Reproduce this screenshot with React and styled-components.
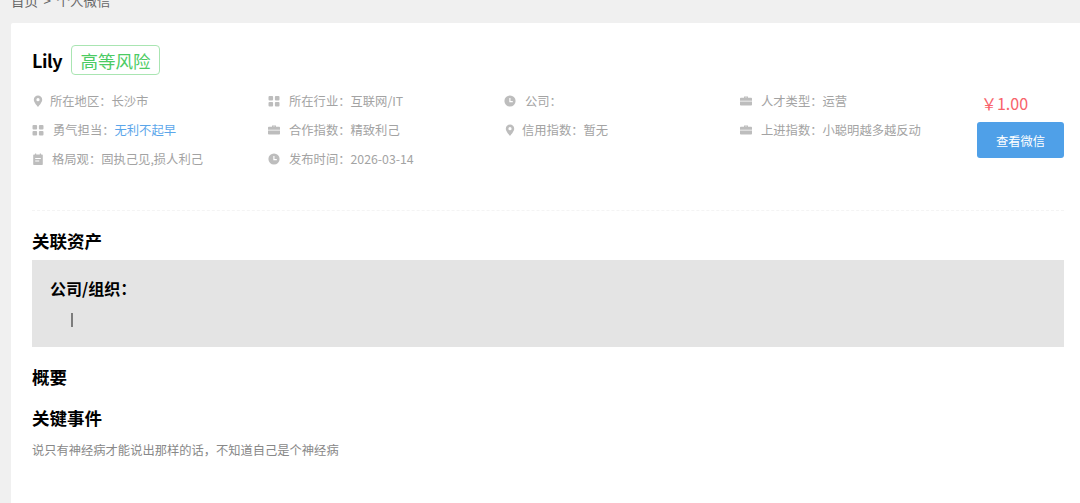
import React from "react";
import styled, { createGlobalStyle } from "styled-components";

const FONT = `"Noto Sans CJK SC", "Noto Sans", sans-serif`;

const GlobalStyle = createGlobalStyle`
  html, body {
    margin: 0;
    padding: 0;
    height: 503px;
    overflow: hidden;
    background: #f0f0f0;
    font-family: ${FONT};
  }
`;

const Page = styled.div`
  height: 503px;
  padding-left: 11px;
  overflow: hidden;
  box-sizing: border-box;
`;

const Breadcrumb = styled.div`
  height: 23px;
  margin-top: -9px;
  padding-bottom: 9px;
  font-size: 13.5px;
  word-spacing: 2.5px;
  line-height: 18px;
  color: #666;
`;

const Card = styled.div`
  background: #fff;
  border-radius: 2px 0 0 0;
  height: 480px;
  padding: 22px 16px 0 21px;
  box-sizing: border-box;
`;

const TitleRow = styled.div`
  display: flex;
  align-items: center;
  gap: 9px;
  height: 30px;
`;

const Name = styled.span`
  width: 30px;
  font-size: 18px;
  letter-spacing: -0.4px;
  font-weight: 700;
  color: #000;
`;

const RiskTag = styled.span`
  display: flex;
  align-items: center;
  justify-content: center;
  width: 89px;
  height: 30px;
  box-sizing: border-box;
  border: 1px solid #a9e5b2;
  border-radius: 4px;
  font-size: 17.5px;
  color: #4ccb63;
`;

const Summary = styled.div`
  display: flex;
  margin-top: 11px;
  height: 124px;
  border-bottom: 1px dashed #f4f4f4;
`;

const MetaGrid = styled.div`
  display: grid;
  grid-template-columns: repeat(4, 236px);
  grid-auto-rows: 29px;
`;

const MetaItem = styled.div`
  display: flex;
  align-items: center;
  font-size: 12.3px;
  color: #a3a3a3;
  white-space: nowrap;
`;

const MetaIcon = styled.svg`
  width: 12px;
  height: 12px;
  flex: none;
  margin-right: ${({ $gap }) => $gap}px;
  fill: #bdbdbd;
`;

const MetaValue = styled.span`
  color: ${({ $link }) => ($link ? "#5ba6ea" : "#a3a3a3")};
`;

const Buy = styled.div`
  width: 87px;
  margin-left: 1px;
  display: flex;
  flex-direction: column;
  align-items: center;
`;

const Price = styled.div`
  height: 29px;
  margin: 3px 32px 0 0;
  font-size: 16px;
  line-height: 29px;
  color: #f8636b;
`;

const ViewButton = styled.button`
  width: 87px;
  height: 36px;
  margin-top: 4px;
  padding: 2px 0 0;
  border: 0;
  border-radius: 3px;
  background: #4fa0e8;
  color: #fff;
  font-family: ${FONT};
  font-size: 12.3px;
`;

const SectionTitle = styled.h3`
  margin: ${({ $top }) => $top}px 0 0;
  font-size: 17.5px;
  line-height: 24px;
  font-weight: 700;
  color: #000;
`;

const AssetBox = styled.div`
  margin-top: 7px;
  height: 87px;
  padding: 17px 18px 0;
  box-sizing: border-box;
  background: #e4e4e4;
`;

const AssetLabel = styled.div`
  font-size: 16px;
  line-height: 22px;
  font-weight: 700;
  color: #000;
`;

const AssetValue = styled.div`
  margin: 14px 0 0 21px;
  width: 1.5px;
  height: 14px;
  background: #7c7c7c;
`;

const Description = styled.p`
  margin: 10px 0 0;
  font-size: 12.28px;
  line-height: 20px;
  color: #888;
`;

const Pin = () => (
  <path d="M6 0.5a4.2 4.2 0 0 0-4.2 4.2C1.8 7.6 6 11.8 6 11.8s4.2-4.2 4.2-7.1A4.2 4.2 0 0 0 6 .5zm0 5.8a1.6 1.6 0 1 1 0-3.2 1.6 1.6 0 0 1 0 3.2z" fillRule="evenodd" />
);

const Grid = () => (
  <g>
    <rect x="0.5" y="1" width="4.6" height="4.4" rx="1" />
    <rect x="6.9" y="1" width="4.6" height="4.4" rx="1" />
    <rect x="0.5" y="7" width="4.6" height="4.4" rx="1" />
    <rect x="6.9" y="7" width="4.6" height="4.4" rx="1" />
  </g>
);

const Clock = () => (
  <path d="M6 .4a5.6 5.6 0 1 0 0 11.2A5.6 5.6 0 0 0 6 .4zm2.8 6.9H5.3V2.9h1.2v3.2h2.3z" fillRule="evenodd" />
);

const Case = () => (
  <path d="M4 2.8V1.5h4v1.3h3.2c.4 0 .8.4.8.8v2.2H0V3.6c0-.4.4-.8.8-.8zm1-.3v.3h2v-.3zM0 6.6h12v3.2c0 .4-.4.8-.8.8H.8c-.4 0-.8-.4-.8-.8z" fillRule="evenodd" />
);

const Notes = () => (
  <path d="M3 .4h1.2v1.2h3.6V.4H9v1.2h1.1c.4 0 .7.3.7.7v8.9c0 .4-.3.7-.7.7H1.9c-.4 0-.7-.3-.7-.7V2.3c0-.4.3-.7.7-.7H3zM3.2 5v1.1h5.6V5zm0 2.4v1.1h4V7.4z" fillRule="evenodd" />
);

const ICONS = { pin: Pin, grid: Grid, clock: Clock, case: Case, notes: Notes };

const META = [
  { icon: "pin", gap: 6, label: "所在地区：", value: "长沙市" },
  { icon: "grid", gap: 9, label: "所在行业：", value: "互联网/IT" },
  { icon: "clock", gap: 9, label: "公司：", value: "" },
  { icon: "case", gap: 9, label: "人才类型：", value: "运营" },
  { icon: "grid", gap: 9, label: "勇气担当：", value: "无利不起早", link: true },
  { icon: "case", gap: 9, label: "合作指数：", value: "精致利己" },
  { icon: "pin", gap: 6, label: "信用指数：", value: "暂无" },
  { icon: "case", gap: 9, label: "上进指数：", value: "小聪明越多越反动" },
  { icon: "notes", gap: 8, label: "格局观：", value: "固执己见,损人利己" },
  { icon: "clock", gap: 9, label: "发布时间：", value: "2026-03-14" },
];

const App = () => (
  <Page>
    <GlobalStyle />
    <Breadcrumb>首页 &gt; 个人微信</Breadcrumb>
    <Card>
      <TitleRow>
        <Name>Lily</Name>
        <RiskTag>高等风险</RiskTag>
      </TitleRow>
      <Summary>
        <MetaGrid>
          {META.map((item) => {
            const Icon = ICONS[item.icon];
            return (
              <MetaItem key={item.label}>
                <MetaIcon viewBox="0 0 12 12" $gap={item.gap}>
                  <Icon />
                </MetaIcon>
                {item.label}
                <MetaValue $link={item.link}>{item.value}</MetaValue>
              </MetaItem>
            );
          })}
        </MetaGrid>
        <Buy>
          <Price>￥1.00</Price>
          <ViewButton>查看微信</ViewButton>
        </Buy>
      </Summary>
      <SectionTitle $top={18}>关联资产</SectionTitle>
      <AssetBox>
        <AssetLabel>公司/组织：</AssetLabel>
        <AssetValue />
      </AssetBox>
      <SectionTitle $top={18}>概要</SectionTitle>
      <SectionTitle $top={17}>关键事件</SectionTitle>
      <Description>说只有神经病才能说出那样的话，不知道自己是个神经病</Description>
    </Card>
  </Page>
);

export default App;
